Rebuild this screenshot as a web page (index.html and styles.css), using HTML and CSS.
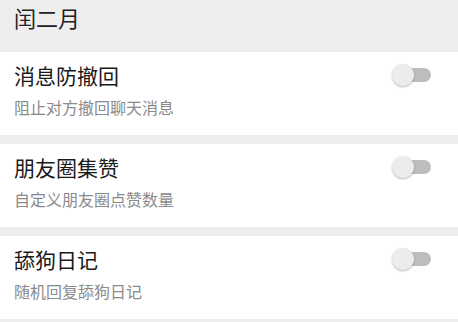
FILE: index.html
```html
<!DOCTYPE html>
<html lang="zh-CN">
<head>
<meta charset="utf-8">
<title>闰二月</title>
<link rel="stylesheet" href="styles.css">
</head>
<body>
<div class="header">闰二月</div>
<div class="list">
  <div class="card">
    <div class="row">
      <div class="title">消息防撤回</div>
      <div class="switch"><span class="track"></span><span class="thumb"></span></div>
    </div>
    <div class="desc">阻止对方撤回聊天消息</div>
  </div>
  <div class="card">
    <div class="row">
      <div class="title">朋友圈集赞</div>
      <div class="switch"><span class="track"></span><span class="thumb"></span></div>
    </div>
    <div class="desc">自定义朋友圈点赞数量</div>
  </div>
  <div class="card">
    <div class="row">
      <div class="title">舔狗日记</div>
      <div class="switch"><span class="track"></span><span class="thumb"></span></div>
    </div>
    <div class="desc">随机回复舔狗日记</div>
  </div>
</div>
</body>
</html>
```
FILE: styles.css
```css
html, body {
  margin: 0;
  padding: 0;
}
body {
  background: #eeeeee;
  font-family: "Noto Sans CJK SC", "Noto Sans", sans-serif;
  width: 458px;
  height: 322px;
  overflow: hidden;
}
.header {
  height: 52px;
  box-sizing: border-box;
  padding: 2px 14px 0;
  font-size: 22px;
  line-height: 30px;
  color: #222222;
}
.list {
  display: flex;
  flex-direction: column;
  gap: 9px;
}
.card {
  background: #ffffff;
  padding: 9px 0 17px 14px;
  height: 83px;
  box-sizing: border-box;
}
.row {
  display: flex;
  align-items: center;
  justify-content: space-between;
}
.title {
  font-size: 21px;
  line-height: 28px;
  color: #1a1a1a;
}
.desc {
  margin-top: 7px;
  font-size: 16px;
  line-height: 22px;
  color: #8a8a8a;
}
.switch {
  position: relative;
  width: 39px;
  height: 22px;
  margin-right: 27px;
}
.track {
  position: absolute;
  right: 0;
  top: 4px;
  width: 35px;
  height: 14px;
  border-radius: 7px;
  background: #bdbdbd;
}
.thumb {
  position: absolute;
  left: 0;
  top: 0;
  width: 22px;
  height: 22px;
  border-radius: 50%;
  background: #ececec;
  box-shadow: 0 1px 2px rgba(0, 0, 0, 0.28);
}
```
